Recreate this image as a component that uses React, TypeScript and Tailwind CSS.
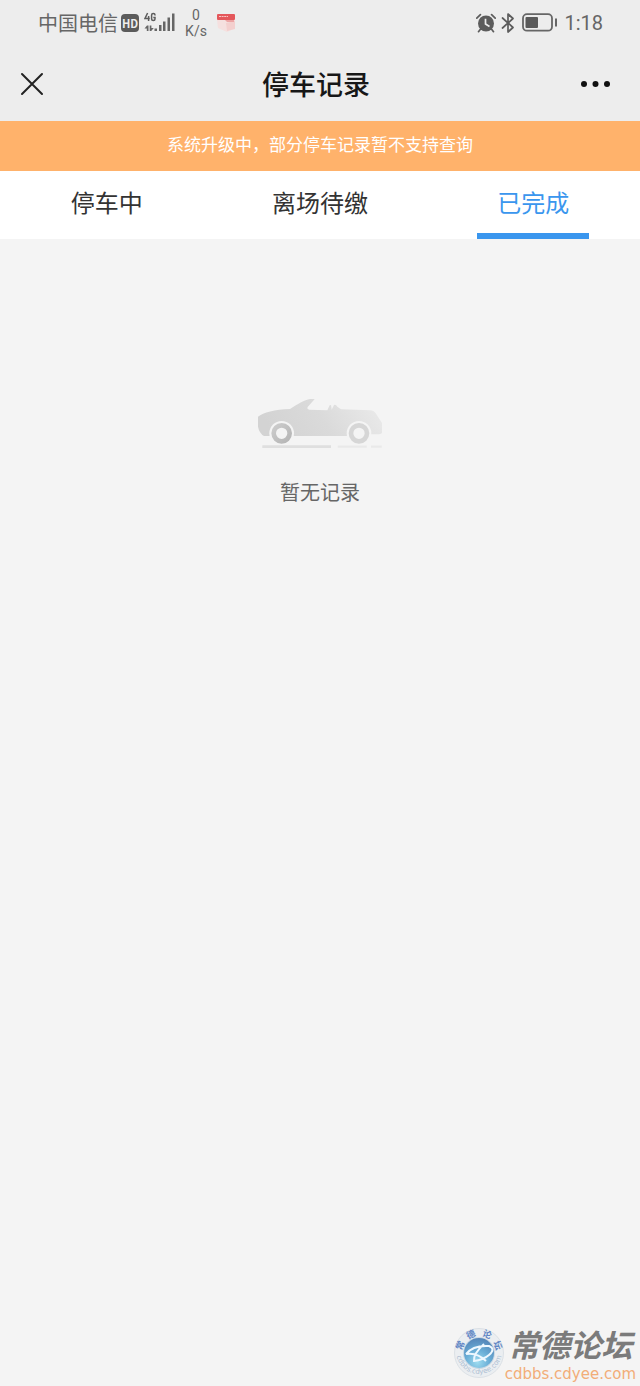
import React, { useState } from "react";

const tabs = ["停车中", "离场待缴", "已完成"];

function StatusBar() {
  return (
    <div className="flex h-[46px] items-center justify-between pr-[37px] pl-[38px] text-[#666666]">
      <div className="flex items-center">
        <span className="text-[20px] leading-6">中国电信</span>
        <span className="ml-[3px] flex h-[18px] w-[18px] items-center justify-center rounded bg-[#5b5b5b] text-[11px] leading-none font-bold text-[#eeeeee]">
          HD
        </span>
        <svg className="ml-[5px]" width="32" height="22" viewBox="0 0 32 22" fill="#666666" aria-hidden="true">
          <path d="M3.600 1 1 6.500h4.800M4.600 4v5M11 3.600V3Q11 1.500 9.300 1.500T7.600 3v4q0 1.500 1.700 1.500T11 7V5.400H9.300" fill="none" stroke="#5c5c5c" strokeWidth="1.500" />
          <path d="M.5 16.500 3 13.500h1.500V19H2.800v-2.500zM5.700 13.500h1.700V16h2.400L7.200 19H5.700z" />
          <rect x="10.500" y="16.500" width="2.500" height="2.500" />
          <rect x="15" y="13" width="2.500" height="6" />
          <rect x="19" y="9.500" width="2.500" height="9.500" />
          <rect x="23.500" y="5.500" width="2.500" height="13.500" />
          <rect x="28" y="1.500" width="2.500" height="17.500" />
        </svg>
        <div className="ml-2 flex w-6 flex-col items-center font-[Roboto,sans-serif] text-[14px] leading-4">
          <span>0</span>
          <span>K/s</span>
        </div>
        <svg className="ml-2" width="22" height="20" viewBox="0 0 22 20" aria-hidden="true">
          <path d="M1 7h18v8l-8 4-9-4z" fill="#f5e0df" />
          <path d="M10 10l9-2v8l-8 2z" fill="#f3cfce" />
          <rect x="1" y="1" width="18" height="6" rx="1" fill="#e4575b" />
          <path d="M3 3.500h9" stroke="#f9c5c4" strokeWidth="1.200" strokeDasharray="2 .6" />
          <path d="M9 7h9v2h-7z" fill="#eda5a5" />
        </svg>
      </div>
      <div className="flex items-center">
        <svg width="20" height="20" viewBox="0 0 20 20" fill="#5c5c5c" aria-hidden="true">
          <circle cx="10" cy="10.500" r="8" />
          <path d="M.8 5.200 4.400 1.700M19.200 5.200l-3.600-3.500M4.200 16.500l-1.700 2.200M15.800 16.500l1.700 2.200" fill="none" stroke="#5c5c5c" strokeWidth="1.700" strokeLinecap="round" />
          <path d="M9.500 5.800v5.200l4 2.500" fill="none" stroke="#ededed" strokeWidth="1.700" />
        </svg>
        <svg className="ml-[5px]" width="14" height="22" viewBox="0 0 14 22" fill="none" stroke="#5c5c5c" strokeWidth="1.700" aria-hidden="true">
          <path d="m1.500 6 10.500 9.500L7 20V2l5 4.500L1.500 16" strokeLinejoin="round" strokeLinecap="round" />
        </svg>
        <svg className="ml-[7px]" width="36" height="20" viewBox="0 0 36 20" aria-hidden="true">
          <rect x="1" y="1.200" width="29" height="16.500" rx="4" fill="none" stroke="#666666" strokeWidth="1.800" />
          <rect x="3.500" y="4" width="12.500" height="11" rx="1" fill="#5a5a5a" />
          <path d="M34 5.500v8" stroke="#666666" strokeWidth="2" />
        </svg>
        <span className="ml-[6px] font-[Roboto,sans-serif] text-[20px] leading-6">1:18</span>
      </div>
    </div>
  );
}

function CarIllustration() {
  return (
    <svg width="128" height="52" viewBox="48 54 384 156" aria-hidden="true">
      <defs>
        <linearGradient id="body" x1="0" y1="0.300" x2="1" y2="0.100">
          <stop offset="0" stopColor="#d3d3d3" />
          <stop offset="0.450" stopColor="#dadada" />
          <stop offset="1" stopColor="#ebebeb" />
        </linearGradient>
        <linearGradient id="wheel" x1="0" y1="0" x2="1" y2="1">
          <stop offset="0" stopColor="#cccccc" />
          <stop offset="1" stopColor="#b5b5b5" />
        </linearGradient>
      </defs>
      <path d="M54 110C70 98 104 88 150 87C172 72 194 60 210 57H224L221 61L203 81Q200 88 208 89L262 91L269 76Q274 72 274 81L275 89L282 75Q288 73 292 80L303 88L390 91Q401 91 407 100L426 129V158Q424 163 410 163H391L357 168H72Q58 160 54 140Z" fill="url(#body)" />
      <circle cx="125" cy="160" r="37" fill="#f4f4f4" />
      <circle cx="357" cy="160" r="37" fill="#f4f4f4" />
      <circle cx="125" cy="160" r="24" fill="none" stroke="url(#wheel)" strokeWidth="14" />
      <circle cx="357" cy="160" r="24" fill="none" stroke="#d6d6d6" strokeWidth="14" />
      <path d="M67 200h206" stroke="#dfdfdf" strokeWidth="8" />
      <path d="M293 200h87M393 200h32" stroke="#e9e9e9" strokeWidth="7" />
    </svg>
  );
}

function ForumMark() {
  return (
    <div className="flex items-center">
      <svg width="52" height="52" viewBox="0 0 52 52" aria-hidden="true">
        <defs>
          <radialGradient id="globe" cx="0.450" cy="0.800" r="0.800">
            <stop offset="0" stopColor="#9edcf0" />
            <stop offset="0.500" stopColor="#69add6" />
            <stop offset="1" stopColor="#5484b7" />
          </radialGradient>
          <path id="upper" d="M9 26a17 17 0 0 1 34 0" />
          <path id="lower" d="M3 24a23 23 0 0 0 46 0" />
        </defs>
        <circle cx="26" cy="26" r="24.500" fill="#ebeef1" stroke="#dce1e6" />
        <circle cx="26" cy="26" r="16" fill="#c9d8e4" />
        <circle cx="26" cy="26" r="15" fill="url(#globe)" />
        <path d="M13 27Q20 18 36 19Q43 22 36 28Q30 33 21 34Q20 27 31 17M13 27Q24 25 33 34" fill="none" stroke="#eef8ff" strokeWidth="2" />
        <g fill="#5f86c4" fontFamily="'Noto Sans CJK SC', sans-serif" fontWeight="700">
          <text fontSize="9">
            <textPath href="#upper" startOffset="2">常</textPath>
            <textPath href="#upper" startOffset="15">德</textPath>
            <textPath href="#upper" startOffset="29">论</textPath>
            <textPath href="#upper" startOffset="42">坛</textPath>
          </text>
        </g>
        <text fontSize="7" fill="#aebfd3" fontFamily="'DejaVu Sans', sans-serif">
          <textPath href="#lower" startOffset="50%" textAnchor="middle">cdbbs.cdyee.com</textPath>
        </text>
      </svg>
      <div className="flex flex-col items-center gap-[2px]">
        <span className="text-[31px] leading-10 font-bold text-[#7b7b7b] italic">常德论坛</span>
        <span className="font-[DejaVu_Sans,sans-serif] text-[15px] leading-4 text-[#f2ad78]">cdbbs.cdyee.com</span>
      </div>
    </div>
  );
}

export default function App() {
  const [active, setActive] = useState("已完成");
  return (
    <div className="flex min-h-screen flex-col bg-[#f4f4f4] font-['Noto_Sans_CJK_SC',sans-serif]">
      <header className="bg-[#ededed]">
        <StatusBar />
        <div className="grid h-[75px] grid-cols-[1fr_auto_1fr] items-center pr-7 pl-5">
          <button type="button" aria-label="关闭" className="justify-self-start">
            <svg width="24" height="24" viewBox="0 0 24 24" fill="none" stroke="#222222" strokeWidth="2" strokeLinecap="round">
              <path d="m2 2 20 20M22 2 2 22" />
            </svg>
          </button>
          <h1 className="text-[27px] leading-9 font-medium text-[#171717]">停车记录</h1>
          <button type="button" aria-label="更多" className="justify-self-end">
            <svg width="32" height="8" viewBox="0 0 32 8" fill="#111111">
              <circle cx="4" cy="4" r="3" />
              <circle cx="15.500" cy="4" r="3" />
              <circle cx="27" cy="4" r="3" />
            </svg>
          </button>
        </div>
      </header>
      <p className="h-[50px] bg-[#ffb26b] pt-[11px] text-center text-[17px] leading-6 text-white">
        系统升级中，部分停车记录暂不支持查询
      </p>
      <nav className="grid h-[68px] grid-cols-3 bg-white">
        {tabs.map((tab) => (
          <button
            key={tab}
            type="button"
            aria-pressed={tab === active}
            onClick={() => setActive(tab)}
            className={
              tab === active
                ? "flex flex-col items-center justify-between pt-[15px] text-[24px] leading-8 text-[#3a96ee]"
                : "flex flex-col items-center justify-between pt-[15px] text-[24px] leading-8 text-[#333333]"
            }
          >
            {tab}
            {tab === active && <span className="h-[6px] w-28 bg-[#3a96ee]" />}
          </button>
        ))}
      </nav>
      <main className="flex grow flex-col items-center pt-[159px]">
        <CarIllustration />
        <p className="mt-[26px] text-[20px] leading-8 text-[#666666]">暂无记录</p>
      </main>
      <footer className="flex justify-end pr-1 pb-1">
        <ForumMark />
      </footer>
    </div>
  );
}
